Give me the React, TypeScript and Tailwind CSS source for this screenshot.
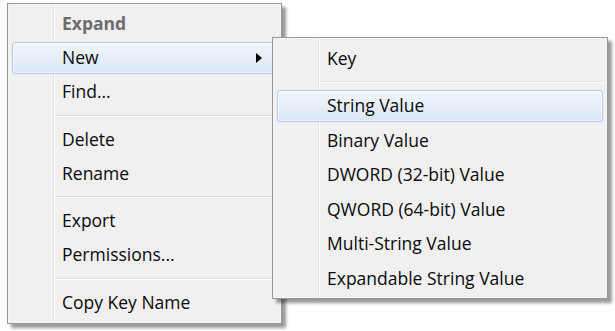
type Entry = { label: string; sep?: false; bold?: boolean; disabled?: boolean; active?: boolean; sub?: boolean } | { sep: true };

const mainItems: Entry[] = [
  { label: 'Expand', bold: true, disabled: true },
  { label: 'New', active: true, sub: true },
  { label: 'Find...' },
  { sep: true },
  { label: 'Delete' },
  { label: 'Rename' },
  { sep: true },
  { label: 'Export' },
  { label: 'Permissions...' },
  { sep: true },
  { label: 'Copy Key Name' },
];

const newItems: Entry[] = [
  { label: 'Key' },
  { sep: true },
  { label: 'String Value', active: true },
  { label: 'Binary Value' },
  { label: 'DWORD (32-bit) Value' },
  { label: 'QWORD (64-bit) Value' },
  { label: 'Multi-String Value' },
  { label: 'Expandable String Value' },
];

function Menu({ items, rowClass, sepClass }: { items: Entry[]; rowClass: string; sepClass: string }) {
  return (
    <div className="relative flex flex-col px-[4px] py-[3px]">
      {/* gutter */}
      <div className="absolute left-[45px] top-[1px] bottom-[1px] w-[2px] border-l border-[#e2e3e3] bg-white" />
      {items.map((it, i) =>
        it.sep ? (
          <div key={i} className={`flex items-center pl-[43px] ${sepClass}`}>
            <div className="h-[2px] w-full border-t border-[#e0e0e0] bg-white" />
          </div>
        ) : (
          <div key={i} className={`relative flex items-center ${rowClass}`}>
            {it.active && (
              <div className="absolute inset-x-0 top-[1px] bottom-[1px] rounded-[3px] border border-[#aecbf0] bg-gradient-to-b from-[#f2f6fc] to-[#dbe6f5] shadow-[inset_0_0_0_1px_rgba(255,255,255,0.55)]" />
            )}
            <span
              className={`relative pl-[50px] ${it.bold ? 'font-bold' : ''} ${it.disabled ? 'text-[#6d6d6d]' : 'text-[#0a0a0a]'}`}
            >
              {it.label}
            </span>
            {it.sub && (
              <svg className="absolute right-[15px] top-1/2 -translate-y-1/2" width="6" height="10" viewBox="0 0 6 10">
                <path d="M0 0 L6 5 L0 10 Z" fill="#000" />
              </svg>
            )}
          </div>
        )
      )}
    </div>
  );
}

export default function App() {
  return (
    <div className="relative h-[331px] w-[615px] overflow-hidden bg-white pl-[7px] pt-[3px] text-[17.5px] leading-none font-['Open_Sans',sans-serif]">
      <div className="h-[321px] w-[275px] border border-[#979797] bg-[#f0f0f0] shadow-[inset_0_0_0_1px_#f5f5f5,4px_4px_3px_rgba(0,0,0,0.4)]">
        <Menu items={mainItems} rowClass="h-[34px]" sepClass="h-[13.6px]" />
      </div>
      {/* submenu popover */}
      <div className="absolute left-[272px] top-[37px] h-[262px] w-[336px] border border-[#979797] bg-[#f0f0f0] shadow-[inset_0_0_0_1px_#f5f5f5,4px_4px_3px_rgba(0,0,0,0.4)]">
        <Menu items={newItems} rowClass="h-[34.5px]" sepClass="h-[13px]" />
      </div>
    </div>
  );
}
